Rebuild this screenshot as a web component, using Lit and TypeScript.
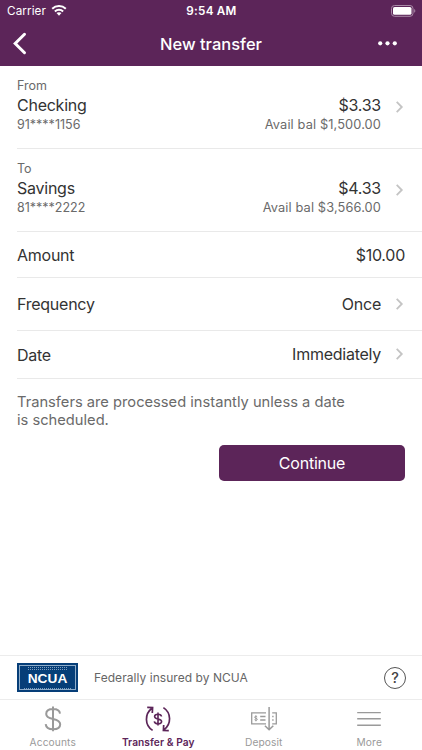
/**
 * New transfer screen: header, transfer form, insurance notice and tab bar
 */

import { LitElement, html, css, svg, nothing } from 'lit';
import { customElement, property, state } from 'lit/decorators.js';
import { classMap } from 'lit/directives/class-map.js';

interface Account {
  role: string;
  name: string;
  number: string;
  balance: string;
  available: string;
}

const ACCOUNTS: Account[] = [
  { role: 'From', name: 'Checking', number: '91****1156', balance: '$3.33', available: '$1,500.00' },
  { role: 'To', name: 'Savings', number: '81****2222', balance: '$4.33', available: '$3,566.00' },
];

const FIELDS = [
  { id: 'amount', label: 'Amount', value: '$10.00', link: false },
  { id: 'frequency', label: 'Frequency', value: 'Once', link: true },
  { id: 'date', label: 'Date', value: 'Immediately', link: true },
];

const TABS = [
  { id: 'accounts', label: 'Accounts' },
  { id: 'transfer', label: 'Transfer & Pay' },
  { id: 'deposit', label: 'Deposit' },
  { id: 'more', label: 'More' },
];

// Tab glyphs, all on a 28x28 grid
const TAB_ICONS: Record<string, unknown> = {
  accounts: svg`
    <path stroke-width="2" d="M14 1.4v24.800M21 8.600C20.700 5.600 18 4 14.100 4 10 4 7.200 5.900 7.200 8.900c0 3.200 2.900 4.200 6.900 5 4.200.9 7.100 2 7.100 5.300 0 3.100-2.900 5-7.100 5-4.300 0-7.100-1.900-7.400-5.100"/>`,
  transfer: svg`
    <path stroke-width="1.7" d="M8.600 25.400C.5 20.200.5 8.800 8 3.200M3.200 2.400l5.400.2-.3 5.400M19.400 2.600c8.100 5.200 8.100 16.600.6 22.200M24.800 25.600l-5.400-.2.300-5.400"/>
    <path stroke-width="1.6" d="M14 7.500v13M17.500 11.500c-.2-1.500-1.500-2.200-3.500-2.200s-3.400.8-3.400 2.300c0 1.600 1.400 2 3.400 2.400 2.200.4 3.600.9 3.600 2.500 0 1.500-1.600 2.300-3.600 2.300s-3.500-.8-3.700-2.400"/>`,
  deposit: svg`
    <path stroke-width="1.300" d="M16 7.800H1.700v11H16M22.200 7.800h4.100v11h-4.100M10.200 11.500h5.300M10.200 15h5.300M22.200 11.500h1.400M22.200 15h1.400"/>
    <path stroke-width="1" d="M5.900 10.300v6M7.200 11.900c-1-1-2.600-.6-2.600.3 0 1.300 2.700.8 2.700 2.200 0 1.100-1.900 1.300-2.800.3"/>
    <path stroke-width="1.500" d="M19.100 2v22.500M14.900 20.700l4.200 4.100 4.200-4.100"/>`,
  more: svg`<path stroke-width="1.400" d="M2.200 7.600h23.600M2.200 13.700h23.600M2.200 20.200h23.600"/>`,
};

@customElement('app-tab-bar')
export class AppTabBar extends LitElement {
  static override styles = css`
    :host {
      display: grid;
      grid-template-columns: repeat(4, 1fr);
      height: 51px;
      box-sizing: border-box;
      border-top: 1px solid #ececec;
      background: #fff;
    }

    .tab {
      display: flex;
      flex-direction: column;
      align-items: center;
      padding-top: 5px;
      color: #9a9a9a;
      font-size: 10.2px;
      line-height: 13px;
      letter-spacing: 0.12px;
      white-space: nowrap;
    }

    .tab.active {
      color: #5c2559;
      font-weight: 600;
      letter-spacing: 0.08px;
    }

    .tab svg {
      width: 28px;
      height: 28px;
      margin-bottom: 3px;
      fill: none;
      stroke: currentColor;
    }
  `;

  @property({ type: String }) active = '';

  override render() {
    return TABS.map(
      (tab) => html`
        <div class=${classMap({ tab: true, active: tab.id === this.active })}>
          <svg viewBox="0 0 28 28">${TAB_ICONS[tab.id]}</svg>
          <span>${tab.label}</span>
        </div>
      `
    );
  }
}

@customElement('app-root')
export class AppRoot extends LitElement {
  static override styles = css`
    :host {
      display: flex;
      flex-direction: column;
      height: 750px;
      background: #fff;
      color: #333;
      font-family: Inter, 'Liberation Sans', sans-serif;
      overflow: hidden;
    }

    .header {
      height: 66px;
      background: #5c2559;
      color: #fff;
    }

    .status,
    .title-bar {
      display: grid;
      grid-template-columns: 1fr auto 1fr;
      align-items: center;
    }

    .status {
      height: 22px;
      padding: 0 6px 0 7px;
      font-size: 11.7px;
    }

    .carrier {
      display: flex;
      align-items: center;
      gap: 5px;
      letter-spacing: 0.1px;
    }

    .wifi {
      width: 16px;
      height: 12px;
      margin-top: -2px;
    }

    .clock {
      font-weight: 600;
      font-size: 11.7px;
      letter-spacing: 0.25px;
    }

    .battery {
      width: 25px;
      height: 12px;
      justify-self: end;
    }

    .title-bar {
      height: 43px;
      padding: 0 25px 0 12px;
    }

    .back {
      width: 15px;
      height: 23px;
    }

    .title {
      margin-left: 13px;
      font-size: 16.5px;
      font-weight: 500;
    }

    .dots {
      width: 19px;
      height: 5px;
      justify-self: end;
    }

    .row {
      display: flex;
      justify-content: space-between;
      box-sizing: border-box;
      margin-left: 17px;
      padding-right: 17px;
      border-bottom: 1px solid #e9e9e9;
      font-size: 16px;
      letter-spacing: -0.25px;
    }

    .account {
      height: 83px;
      padding-top: 12px;
    }

    .field {
      align-items: center;
    }

    .amount {
      height: 46px;
    }

    .frequency {
      height: 53px;
    }

    .date {
      height: 48px;
    }

    .date .side {
      margin-top: -2px;
    }

    .role,
    .detail {
      color: #6a6a6a;
      font-size: 12.5px;
      line-height: 16px;
      letter-spacing: 0;
    }

    .figures .detail {
      font-size: 12.8px;
      letter-spacing: 0.12px;
    }

    .name {
      line-height: 23px;
    }

    .side {
      display: flex;
      align-items: center;
      gap: 14px;
    }

    .account .side {
      align-self: flex-start;
      margin-top: 16px;
    }

    .figures {
      text-align: right;
    }

    .chevron {
      width: 9px;
      height: 14px;
      margin-right: 1px;
      fill: none;
      stroke: #c4c4c4;
      stroke-width: 1.8;
    }

    .account .chevron {
      margin-top: -14px;
    }

    .note {
      margin: 14px 70px 0 17px;
      color: #6a6a6a;
      font-size: 14.7px;
      line-height: 18px;
    }

    .continue {
      align-self: flex-end;
      width: 186px;
      height: 36px;
      margin: 16px 17px 0 0;
      padding: 0;
      border: 0;
      border-radius: 5px;
      background: #5c2559;
      color: #fff;
      font: 400 16px Inter, 'Liberation Sans', sans-serif;
      letter-spacing: -0.2px;
    }

    .insured {
      display: flex;
      align-items: center;
      box-sizing: border-box;
      height: 44px;
      margin-top: auto;
      padding: 0 16px 0 17px;
      border-top: 1px solid #ececec;
      color: #666;
      font-size: 12px;
      letter-spacing: 0.05px;
    }

    .badge {
      display: grid;
      grid-template-rows: 4px 1fr 1px;
      box-sizing: border-box;
      width: 61px;
      height: 29px;
      padding: 3px 3px 4px;
      outline: 1px solid #8fadca;
      outline-offset: -3px;
      background: #063e78;
      color: #fff;
      font-family: 'Liberation Sans', sans-serif;
      font-size: 13.7px;
      font-weight: 700;
      line-height: 18px;
      text-align: center;
    }

    .fine {
      margin: 1px 8px 0;
      border-top: 1px dotted #7d9fc0;
      border-bottom: 1px dotted #7d9fc0;
    }

    .fine.bottom {
      margin: 0 4px;
      border-top: 0;
    }

    .insured-text {
      flex: 1;
      margin-left: 16px;
    }

    .help {
      display: grid;
      place-items: center;
      box-sizing: border-box;
      width: 22px;
      height: 22px;
      border: 1px solid #555;
      border-radius: 50%;
      color: #444;
      font-size: 14.5px;
      font-weight: 500;
      line-height: 20px;
    }
  `;

  @state() private activeTab = 'transfer';

  private renderChevron() {
    return html`<svg class="chevron" viewBox="0 0 9 14"><path d="M1.700 1.800 6.800 7l-5.100 5.200" /></svg>`;
  }

  private renderHeader() {
    return html`
      <div class="header">
        <div class="status">
          <div class="carrier">
            <span>Carrier</span>
            <svg class="wifi" viewBox="0 0 16 12" fill="none" stroke="#fff" stroke-width="2">
              <path d="M1.200 4.700c3.800-3.700 9.800-3.700 13.600 0M3.900 7.500c2.300-2.300 5.900-2.300 8.200 0" />
              <path fill="#fff" stroke="none" d="M5.500 9.100c1.400-1.300 3.600-1.300 5 0L8 11.700z" />
            </svg>
          </div>
          <span class="clock">9:54 AM</span>
          <svg class="battery" viewBox="0 0 25 12">
            <rect x=".5" y=".5" width="21.500" height="10.800" rx="3" fill="none" stroke="#a98aa7" />
            <rect x="2" y="2" width="18.500" height="7.800" rx="1.600" fill="#fff" />
            <path d="M23.200 4v3.800c1.500-.7 1.500-3.100 0-3.800z" fill="#a98aa7" />
          </svg>
        </div>
        <div class="title-bar">
          <svg class="back" viewBox="0 0 15 23" fill="none" stroke="#fff" stroke-width="3" stroke-linecap="round">
            <path d="M12.500 2.300 3.200 11.500l9.300 9.200" />
          </svg>
          <span class="title">New transfer</span>
          <svg class="dots" viewBox="0 0 19 5" fill="#fff">
            <circle cx="2.200" cy="2.300" r="2.100" />
            <circle cx="9.500" cy="2.300" r="2.100" />
            <circle cx="16.800" cy="2.300" r="2.100" />
          </svg>
        </div>
      </div>
    `;
  }

  private renderAccount(account: Account) {
    return html`
      <div class="row account">
        <div>
          <div class="role">${account.role}</div>
          <div class="name">${account.name}</div>
          <div class="detail">${account.number}</div>
        </div>
        <div class="side">
          <div class="figures">
            <div class="name">${account.balance}</div>
            <div class="detail">Avail bal ${account.available}</div>
          </div>
          ${this.renderChevron()}
        </div>
      </div>
    `;
  }

  override render() {
    return html`
      ${this.renderHeader()}
      ${ACCOUNTS.map((account) => this.renderAccount(account))}
      ${FIELDS.map(
        (field) => html`
          <div class="row field ${field.id}">
            <span>${field.label}</span>
            <div class="side">
              <span>${field.value}</span>
              ${field.link ? this.renderChevron() : nothing}
            </div>
          </div>
        `
      )}
      <div class="note">Transfers are processed instantly unless a date is scheduled.</div>
      <button class="continue">Continue</button>
      <div class="insured">
        <div class="badge">
          <div class="fine"></div>
          <span>NCUA</span>
          <div class="fine bottom"></div>
        </div>
        <span class="insured-text">Federally insured by NCUA</span>
        <span class="help">?</span>
      </div>
      <app-tab-bar .active=${this.activeTab}></app-tab-bar>
    `;
  }
}

declare global {
  interface HTMLElementTagNameMap {
    'app-root': AppRoot;
    'app-tab-bar': AppTabBar;
  }
}
